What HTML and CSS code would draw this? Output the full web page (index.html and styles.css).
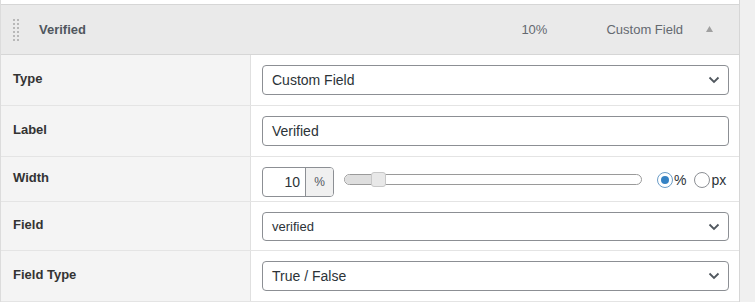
FILE: index.html
```html
<!DOCTYPE html>
<html>
<head>
<meta charset="utf-8">
<link rel="stylesheet" href="styles.css">
</head>
<body>
<div class="box">
  <div class="stub"></div>
  <div class="head">
    <div class="handle">
      <i></i><i></i><i></i><i></i><i></i><i></i><i></i><i></i><i></i><i></i><i></i><i></i>
    </div>
    <div class="title">Verified</div>
    <div class="hwidth">10%</div>
    <div class="htype">Custom Field</div>
    <svg class="harrow" width="7" height="6" viewBox="0 0 7 6"><path d="M3.5 0L7 6H0Z" fill="#a0a0a0"/></svg>
  </div>
  <div class="row r50">
    <div class="lab">Type</div>
    <div class="val">
      <div class="ctl sel"><span>Custom Field</span><svg width="12" height="8" viewBox="0 0 12 8"><path d="M1.5 1.5L6 6L10.5 1.5" fill="none" stroke="#50575e" stroke-width="1.8"/></svg></div>
    </div>
  </div>
  <div class="row r50">
    <div class="lab">Label</div>
    <div class="val">
      <div class="ctl"><span>Verified</span></div>
    </div>
  </div>
  <div class="row r44">
    <div class="lab">Width</div>
    <div class="val wrow">
      <div class="num"><span class="nv">10</span><span class="unit">%</span></div>
      <div class="slider"><div class="fill"></div><div class="knob"></div></div>
      <div class="radios">
        <span class="radio on"></span><span class="rl">%</span>
        <span class="radio"></span><span class="rl">px</span>
      </div>
    </div>
  </div>
  <div class="row r48">
    <div class="lab">Field</div>
    <div class="val">
      <div class="ctl sel small"><span>verified</span><svg width="12" height="8" viewBox="0 0 12 8"><path d="M1.5 1.5L6 6L10.5 1.5" fill="none" stroke="#50575e" stroke-width="1.8"/></svg></div>
    </div>
  </div>
  <div class="row r50 last">
    <div class="lab">Field Type</div>
    <div class="val">
      <div class="ctl sel"><span>True / False</span><svg width="12" height="8" viewBox="0 0 12 8"><path d="M1.5 1.5L6 6L10.5 1.5" fill="none" stroke="#50575e" stroke-width="1.8"/></svg></div>
    </div>
  </div>
</div>
</body>
</html>
```
FILE: styles.css
```css
* { box-sizing: border-box; }
html, body { margin: 0; padding: 0; }
body {
  background: #f0f0f0;
  font-family: "Liberation Sans", Arial, sans-serif;
  color: #2c3338;
}
.box {
  width: 740px;
  background: #fff;
  border-left: 1px solid #dcdcdc;
  border-right: 1px solid #d6d6d6;
}
.stub {
  height: 5px;
  border-bottom: 1px solid #d6d6d6;
}
.head {
  height: 50px;
  background: #eaeaea;
  border-bottom: 1px solid #d6d6d6;
  display: flex;
  align-items: center;
  padding-left: 12px;
  font-size: 13px;
  color: #555;
}
.handle {
  display: grid;
  grid-template-columns: 2px 2px;
  column-gap: 2px;
  row-gap: 2px;
  width: 6px;
}
.handle i {
  display: block;
  width: 2px;
  height: 2px;
  background: #b8b8b8;
}
.title {
  font-weight: bold;
  margin-left: 20px;
  color: #50575e;
}
.hwidth { margin-left: auto; color: #646970; }
.htype { margin-left: 59px; color: #646970; }
.harrow { margin-left: 23px; margin-right: 26px; margin-top: -2px; }

.row {
  display: grid;
  grid-template-columns: 250px 1fr;
  border-bottom: 1px solid #e4e4e4;
}
.r50 { height: 51px; }
.r44 { height: 45px; }
.r48 { height: 49px; }
.lab {
  background: #f4f4f4;
  border-right: 1px solid #e0e0e0;
  font-weight: bold;
  font-size: 13px;
  color: #333;
  padding-left: 12px;
  padding-bottom: 3px;
  display: flex;
  align-items: center;
}
.val {
  padding: 10px 10px 0 11px;
}
.ctl {
  height: 30px;
  border: 1px solid #8c8f94;
  border-radius: 4px;
  display: flex;
  align-items: center;
  padding: 0 8px 0 9px;
  font-size: 14px;
  color: #2c3338;
  background: #fff;
}
.sel { justify-content: space-between; }
.small { height: 29px; font-size: 13px; }
.wrow {
  display: flex;
  align-items: flex-start;
}
.num {
  width: 72px;
  height: 30px;
  border: 1px solid #8c8f94;
  border-radius: 4px;
  display: flex;
  overflow: hidden;
  font-size: 14px;
}
.nv {
  flex: 1;
  text-align: right;
  padding-right: 5px;
  line-height: 28px;
  border-right: 1px solid #8c8f94;
}
.unit {
  width: 27px;
  background: #f0f0f0;
  text-align: center;
  line-height: 28px;
  font-size: 12px;
  color: #50575e;
}
.slider {
  position: relative;
  width: 298px;
  height: 11px;
  margin-left: 10px;
  margin-top: 7px;
  border: 1px solid #9a9a9a;
  border-radius: 6px;
  background: #fff;
}
.fill {
  width: 30px;
  height: 100%;
  background: #dedede;
  border-radius: 6px 0 0 6px;
}
.knob {
  position: absolute;
  left: 26px;
  top: -3px;
  width: 15px;
  height: 15px;
  border: 1px solid #c8c8c8;
  border-radius: 3px;
  background: #e8e8e8;
}
.radios {
  display: flex;
  align-items: center;
  margin-left: 15px;
  margin-top: 5px;
  font-size: 14px;
  color: #2c3338;
}
.radio {
  width: 16px;
  height: 16px;
  border: 1px solid #8c8f94;
  border-radius: 50%;
  background: #fff;
  display: flex;
  align-items: center;
  justify-content: center;
}
.radio.on { border-color: #6b9dc8; }
.radio.on::after {
  content: "";
  width: 8px;
  height: 8px;
  border-radius: 50%;
  background: #3582c4;
}
.rl { margin-left: 1px; margin-right: 8px; }
```
